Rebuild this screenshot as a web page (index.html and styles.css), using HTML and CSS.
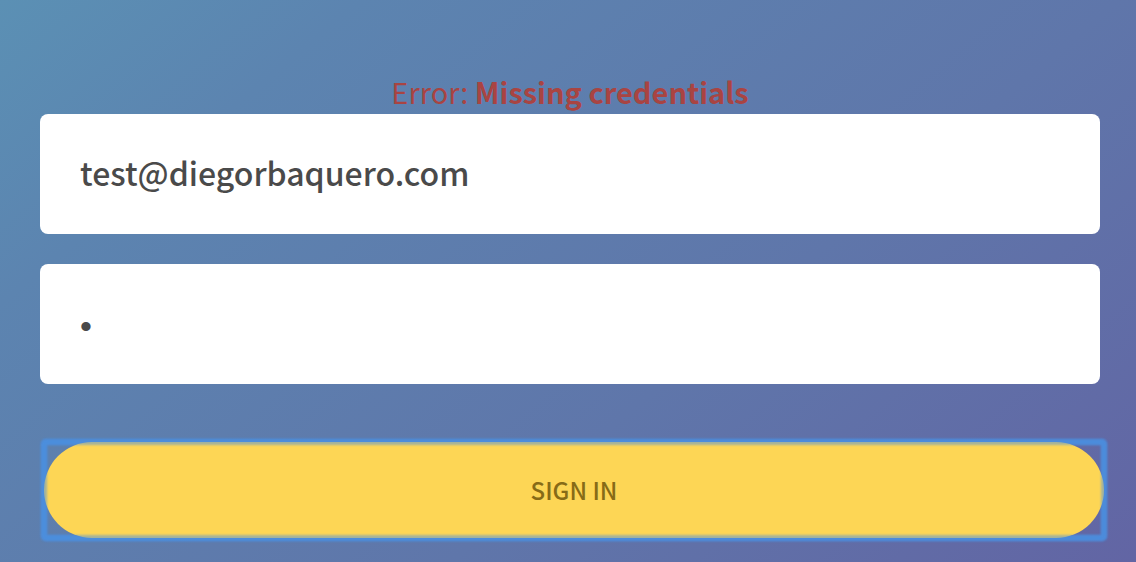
FILE: index.html
```html
<!DOCTYPE html>
<html lang="en">
<head>
<meta charset="utf-8">
<title>Sign in</title>
<link rel="stylesheet" href="styles.css">
</head>
<body>
<form class="login">
  <p class="error" role="alert">Error: <strong>Missing credentials</strong></p>
  <input class="field" type="email" aria-label="Email" value="test@diegorbaquero.com">
  <input class="field field-password" type="password" aria-label="Password" value="a">
  <button class="submit" type="button">SIGN IN</button>
</form>
</body>
</html>
```
FILE: styles.css
```css
* {
  box-sizing: border-box;
}

body {
  margin: 0;
  min-height: 100vh;
  background: linear-gradient(140deg, #5b90b4 0%, #5c84b0 20%, #5f76aa 62%, #6265a4 100%);
  font-family: "Noto Sans CJK SC", "Noto Sans", sans-serif;
}

.login {
  display: flex;
  flex-direction: column;
  isolation: isolate;
  padding: 70px 36px 24px 40px;
}

.error {
  margin: 0;
  padding-bottom: 2px;
  color: #a94442;
  font-size: 29px;
  line-height: 42px;
  text-align: center;
}

.field {
  height: 120px;
  margin: 0 0 30px;
  padding: 0 40px 4px;
  border: 0;
  border-radius: 8px;
  outline: 0;
  background: #fff;
  color: #4a4a4a;
  font: 500 32px "Noto Sans CJK SC", "Noto Sans", sans-serif;
}

.field-password {
  padding: 4px 40px 0;
  font: 34px "Liberation Sans", Arial, sans-serif;
}

.submit {
  position: relative;
  height: 96px;
  margin: 28px -4px 0 4px;
  padding: 0 0 2px;
  border: 0;
  border-radius: 48px;
  background: #fdd655;
  color: #876b17;
  font: 500 24px "Noto Sans CJK SC", "Noto Sans", sans-serif;
}

/* Focus ring: full strength behind the pill, translucent over its edge */
.submit::before,
.submit::after {
  content: "";
  position: absolute;
  inset: -3px;
  border: 6px solid #4a90e2;
  border-radius: 5px;
  filter: blur(1px);
}

.submit::before {
  z-index: -1;
  opacity: 0.8;
}

.submit::after {
  opacity: 0.5;
}
```
